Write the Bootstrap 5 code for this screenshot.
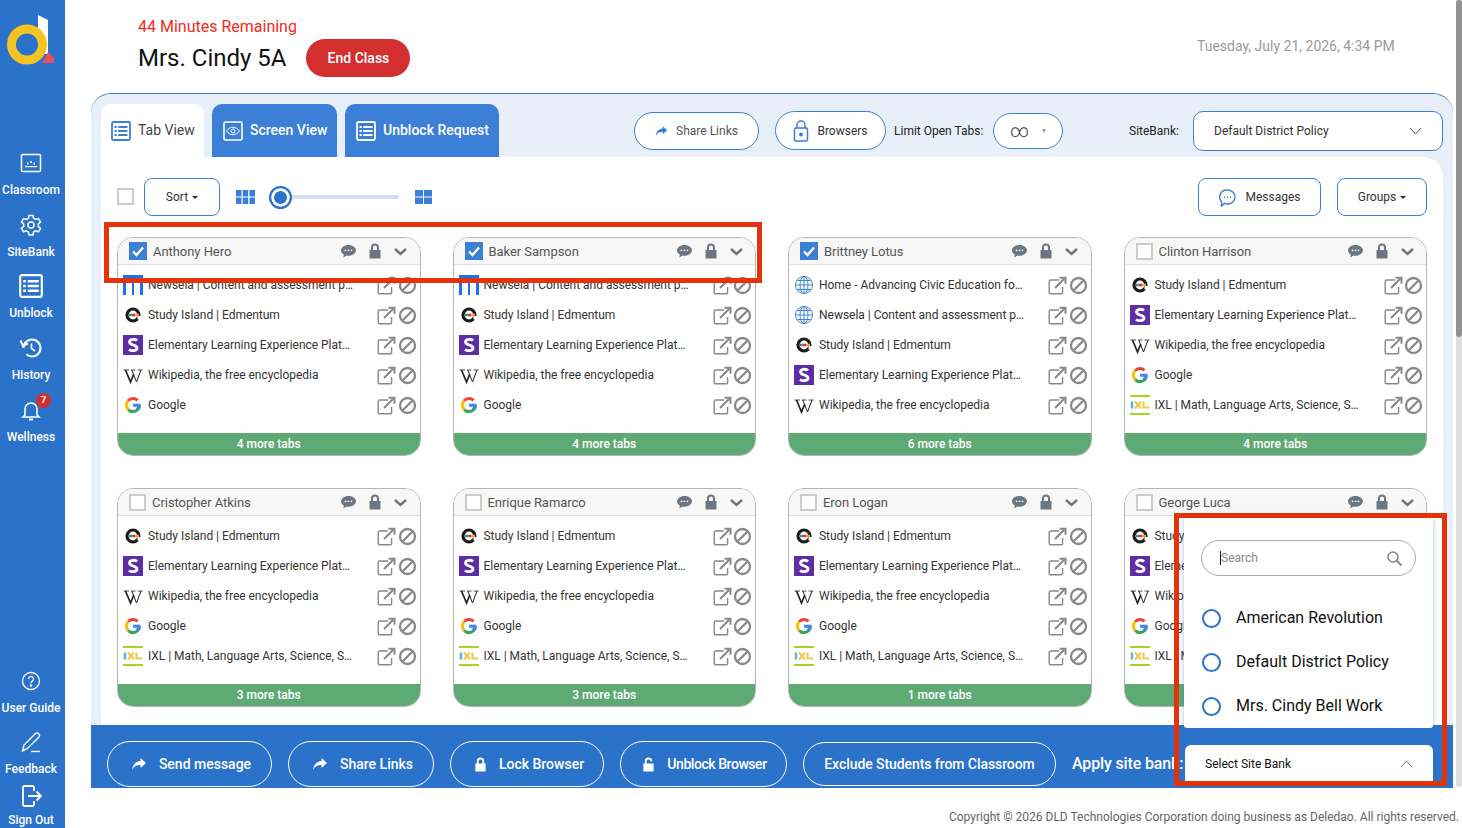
<!doctype html>
<html lang="en">
<head>
<meta charset="utf-8">
<title>Classroom</title>
<link rel="stylesheet" href="https://cdn.jsdelivr.net/npm/bootstrap@5.3.0/dist/css/bootstrap.min.css">
<style>
html,body{height:828px;overflow:hidden}
body{font-family:Roboto,"Liberation Sans",sans-serif;background:#fff;color:#222;font-size:12px;position:relative;width:1462px}
.pg-wrap{width:1462px;height:828px}
.side{width:65px;height:828px;background:#2b72cb;color:#fff;flex:none}
.logo-box{height:150px;padding:14px 0 0 7px}
.side-item{width:62px;height:61.7px;text-align:center;font-size:12px;font-weight:500;line-height:14px;position:relative;white-space:nowrap;padding-top:1px}
.side-item svg{display:block;margin:0 auto 8px;height:24px;width:24px}
.side-guide{height:61px}
.side-feed{height:54px}
.side-out{height:45px}
.side-out svg{margin-bottom:5px}
.bell-badge{position:absolute;left:36px;top:-4px;width:15px;height:15px;border-radius:50%;background:#d32f2f;font-size:9px;line-height:15px;font-weight:700}
.scroll-track{width:6px;margin-left:1px;background:#dedede;flex:none;height:787px;border-radius:0 0 3px 3px}
.scroll-thumb{height:337px;background:#929292;border-radius:3px}
.main-col{width:1390px;flex:none;padding-left:26px}
.head-area{height:93px;padding:17px 0 0 47px}
.remain{color:#f5291c;font-size:16px;line-height:19px}
.title-line{font-size:24px;color:#111;line-height:38px;margin-top:3px}
.end-btn{background:#d32f2f;color:#fff;border:0;border-radius:19px;height:38px;width:104px;font-size:14px;font-weight:500;padding:0}
.date-txt{color:#9a9a9a;font-size:14px;margin:19px 0 0 auto;width:258px;height:20px;line-height:20px}
.panel{width:1362px;height:695px;background:#e8eff9;border-top:1px solid #3c7fd5;border-radius:20px 20px 0 0;overflow:hidden;position:relative;flex-direction:column}
.top-row{height:63px;padding:10px 10px 0 10px;flex:none}
.tab-pill{height:53px;border-radius:10px 10px 0 0;background:#3b7fd6;color:#fff;font-size:14px;font-weight:500;padding-left:11px;margin-right:8px;gap:7px}
.tab-pill svg{width:20px;height:20px;flex:none}
.tab-on{background:#fff;color:#444;font-weight:400;margin-right:8px}
.out-pill{background:#fff;border:1px solid #3c7fd5;border-radius:20px;height:38px;color:#555;font-size:12px}
.lbl{font-size:12px;color:#222}
.white-box{flex:1;background:#fff;margin:0 10px;border-radius:0 20px 0 0;padding:0 16px;min-height:0;overflow:hidden}
.tool-row{height:80px;padding-top:21px;flex:none}
.sq-btn{background:#fff;border:1px solid #3c7fd5;border-radius:8px;height:38px;font-size:12px;color:#333;padding:0}
.caret-mini{display:inline-block;border-top:3.5px solid #333;border-left:3px solid transparent;border-right:3px solid transparent;margin-left:4px;vertical-align:2px}
.box-off{width:17px;height:17px;border:2px solid #ccc;background:#fff;flex:none}
.box-on{width:18px;height:18px;background:#3b7fd6;flex:none}
.track-wrap{width:130px;height:22px;position:relative}
.track-line{position:absolute;left:11px;right:0;top:9px;height:4px;background:#d0dff2;border-radius:2px}
.knob{position:absolute;left:0;top:0;width:23px;height:23px;border-radius:50%;background:#2b72cb;border:2px solid #2b72cb;box-shadow:inset 0 0 0 3px #fff}
.grid-cards{display:grid;grid-template-columns:repeat(4,303.5px);column-gap:32px;row-gap:32px}
.pc{height:219px;border:1px solid #b5b5b5;border-radius:16px;overflow:hidden;background:#fff;flex-direction:column}
.pc-head{height:27px;background:#f7f7f7;border-bottom:1px solid #ddd;padding:0 12.5px 0 11px;flex:none;font-size:13px;color:#555;gap:6px}
.pc-name{flex:1;letter-spacing:-.05px;padding-top:1px}
.pc-list{flex:1;padding-top:5px}
.tab-line{height:30px;padding:0 3px 0 5px;font-size:12px;color:#333}
.fav{width:20px;height:20px;flex:none;margin-right:5px}
.tab-name{width:207px;white-space:nowrap;letter-spacing:-.02px}
.act{width:19px;height:19px;flex:none}
.act-a{margin-left:22px}
.act-b{margin-left:1.5px}
.more-bar{height:22px;background:#5eaa74;color:#fff;text-align:center;font-size:12px;font-weight:500;line-height:22px;flex:none}
.foot-bar{height:63px;background:#2b72cb;flex:none;padding:16px 0 0 16px;gap:16px;overflow:hidden;color:#fff;margin-top:auto}
.foot-btn{height:46px;border:1px solid #fff;border-radius:23px;color:#fff;font-size:14px;font-weight:500;flex:none;gap:12px;background:transparent;padding:0}
.foot-tight{letter-spacing:-.45px;gap:12px}
.foot-exclude{height:44px;margin-top:1px;letter-spacing:-.07px}
.apply-txt{font-size:16px;font-weight:500;line-height:46px;white-space:nowrap;flex:none;letter-spacing:-.15px}
.copy-txt{height:40px;width:1368px;text-align:right;color:#666;font-size:12px;padding-top:20px;line-height:18px;white-space:nowrap}
.sb-menu{position:absolute;left:1184px;top:518px;width:249px;height:210px;background:#fff;border-radius:0 0 3px 3px;box-shadow:0 0 5px rgba(43,114,203,.45);padding:22px 17px 0 17px}
.srch{height:36px;border:1px solid #aaa;border-radius:18px;padding:0 12px 0 18px;margin-bottom:20px;color:#888;font-size:12px}
.caret-bar{width:1px;height:14px;background:#111;margin-right:0}
.opt{height:44px;font-size:16px;color:#111;gap:15px;padding-left:1px}
.radio-o{width:19px;height:19px;border:2px solid #2b72cb;border-radius:50%;flex:none}
.sb-pick{position:absolute;left:1185px;top:745px;width:248px;height:38px;background:#fff;border-radius:6px 6px 0 0;font-size:12px;color:#111;padding:0 20px}
.red-box{position:absolute;border:5px solid #e2330b;pointer-events:none}
.red-a{left:104px;top:222px;width:658px;height:61px}
.red-b{left:1174px;top:513px;width:273px;height:273px}
</style>
</head>
<body>
<svg width="0" height="0" class="position-absolute">
<defs>
<symbol id="i-list" viewBox="0 0 20 20"><rect x="1" y="1" width="18" height="18" rx="1.500" fill="none" stroke="currentColor" stroke-width="1.800"/><path d="M3.500 5h2.200v2H3.500zM7.200 5h9.300v2H7.200zM3.500 9h2.200v2H3.500zM7.200 9h9.300v2H7.200zM3.500 13h2.200v2H3.500zM7.200 13h9.300v2H7.200z" fill="currentColor"/></symbol>
<symbol id="i-eye" viewBox="0 0 20 20"><rect x="1" y="1" width="18" height="18" rx="1.500" fill="none" stroke="currentColor" stroke-width="1.600"/><path d="M3.500 10c3.500-5 9.500-5 13 0-3.500 5-9.500 5-13 0z" fill="none" stroke="currentColor"/><circle cx="10" cy="10" r="2" fill="none" stroke="currentColor"/></symbol>
<symbol id="i-share" viewBox="0 0 16 14"><path d="M9.500 1 15 6 9.500 11V8C6 8 3 9 1 13c.5-5 3.500-8.500 8.500-9z" fill="currentColor"/></symbol>
<symbol id="i-lock" viewBox="0 0 14 16"><path d="M3 7V4.500a4 4 0 0 1 8 0V7h1.500v8.500h-11V7zM5 7h4V4.500a2 2 0 0 0-4 0z" fill="currentColor"/></symbol>
<symbol id="i-ext" viewBox="0 0 19 19"><path d="M11 4H2.500a1.300 1.300 0 0 0-1.300 1.300v11.200a1.300 1.300 0 0 0 1.300 1.300h10.800a1.300 1.300 0 0 0 1.300-1.300V11" fill="none" stroke="#888" stroke-width="1.400"/><path d="M7 12 16 3M11.500 1.800H17.500V7.800" fill="none" stroke="#888" stroke-width="2"/></symbol>
<symbol id="i-ban" viewBox="0 0 19 19"><circle cx="9.500" cy="9.500" r="7.500" fill="none" stroke="#888" stroke-width="2.300"/><path d="M4.500 14.500 14.500 4.500" stroke="#888" stroke-width="2.300"/></symbol>
<symbol id="i-news" viewBox="0 0 20 20"><rect width="20" height="20" fill="#1a73e8"/><rect x="3" y="3" width="6" height="17" fill="#fff"/><rect x="11" y="3" width="6" height="17" fill="#fff"/></symbol>
<symbol id="i-edm" viewBox="0 0 20 20"><circle cx="10" cy="10" r="6" fill="none" stroke="#1a1a1a" stroke-width="3.200"/><rect x="14.500" y="11" width="5" height="3.500" fill="#fff"/><path d="M5 10h3.500" stroke="#19a05f" stroke-width="2.400"/><path d="M8.500 10h3.500" stroke="#e6236b" stroke-width="2.400"/><path d="M12 10h4" stroke="#f5a623" stroke-width="2.400"/></symbol>
<symbol id="i-ele" viewBox="0 0 20 20"><rect width="20" height="20" fill="#5b2ea6"/><path d="M14 5.500C12 3.500 6.500 4 6.500 7c0 3.500 7.500 2.500 7.500 6 0 3-5.500 3.500-8 1.500" fill="none" stroke="#fff" stroke-width="2.800"/></symbol>
<symbol id="i-wiki" viewBox="0 0 20 20"><path d="M.5 5h5.500M8 5h4.500M14.500 5h5" fill="none" stroke="#222" stroke-width=".8"/><path d="M2.500 5 7.500 17 10.800 9" fill="none" stroke="#222" stroke-width="1.700"/><path d="M8.800 5 13.500 17 18 5" fill="none" stroke="#222" stroke-width="1"/></symbol>
<symbol id="i-goog" viewBox="0 0 20 20"><path d="M17.500 10.200H10" stroke="#4285f4" stroke-width="3"/><path d="M16.500 10.200a6.500 6.500 0 0 1-11.300 4.200" fill="none" stroke="#34a853" stroke-width="3"/><path d="M16 10.200c0 1.800-1 3.300-2.200 4.300" fill="none" stroke="#4285f4" stroke-width="3"/><path d="M5.200 14.400a6.500 6.500 0 0 1 0-8.800" fill="none" stroke="#fbbc05" stroke-width="3"/><path d="M5.200 5.600a6.500 6.500 0 0 1 9.300-.200" fill="none" stroke="#ea4335" stroke-width="3"/></symbol>
<symbol id="i-ixl" viewBox="0 0 20 20"><rect width="20" height="2" fill="#a8d520"/><rect y="18" width="20" height="2" fill="#a8d520"/><path d="M2 6.500v7" stroke="#4db6e2" stroke-width="2.400"/><path d="M5 6.500l6 7M11 6.500l-6 7" stroke="#f2c94c" stroke-width="2.200"/><path d="M13.500 6.500v6h6" fill="none" stroke="#f2c94c" stroke-width="2.200"/></symbol>
<symbol id="i-globe" viewBox="0 0 20 20"><g fill="none" stroke="#3f86c8" stroke-width="1"><circle cx="10" cy="10" r="8.500"/><ellipse cx="10" cy="10" rx="4" ry="8.500"/><path d="M1.500 10h17M3 5.500h14M3 14.500h14M10 1.500v17"/></g></symbol>
</defs>
</svg>

<div class="pg-wrap d-flex">
  <nav class="side d-flex flex-column">
    <div class="logo-box">
      <svg width="48" height="52" viewBox="0 0 48 52"><path d="M31 1 41 6V40H31z" fill="#fff"/><path d="M41 38 47 44v5H35z" fill="#e8505b"/><circle cx="20" cy="30.500" r="15.500" fill="none" stroke="#f6c324" stroke-width="9"/></svg>
    </div>
    <div class="side-item"><svg viewBox="0 0 24 24" fill="none" stroke="#fff" stroke-width="1.500"><rect x="2.500" y="3.500" width="19" height="17" rx="1"/><path d="M6 15h12v1.200H6z" fill="#fff" stroke="none"/><path d="M8 12.500h1.500M11.200 11h1.600M14.500 12.500H16" stroke-width="2"/></svg>Classroom</div>
    <div class="side-item"><svg viewBox="0 0 24 24" fill="none" stroke="#fff" stroke-width="1.500"><path d="M10 2.500h4l.6 2.800 2.100 1.200 2.800-.9 2 3.400-2.200 2 0 2.400 2.200 2-2 3.400-2.800-.9-2.100 1.200-.6 2.800h-4l-.6-2.800-2.100-1.200-2.800.9-2-3.400 2.200-2v-2.400l-2.200-2 2-3.400 2.800.9 2.100-1.200z"/><circle cx="12" cy="12" r="3"/></svg>SiteBank</div>
    <div class="side-item"><svg viewBox="0 0 20 20" style="color:#fff"><use href="#i-list"/></svg>Unblock</div>
    <div class="side-item"><svg viewBox="0 0 24 24" fill="none" stroke="#fff" stroke-width="2"><path d="M4.500 12a8.500 8.500 0 1 1 2.800 6.300"/><path d="M1.500 4.500 4 10l5-2.500" /><path d="M12.500 7.500V12.500L16 15" stroke-width="1.600"/></svg>History</div>
    <div class="side-item"><svg viewBox="0 0 24 24" fill="none" stroke="#fff" stroke-width="1.600"><path d="M6 17V11a6 6 0 0 1 12 0v6l2 2H4z"/><path d="M10 21.500h4" stroke-width="2"/></svg><span class="bell-badge">7</span>Wellness</div>
    <div class="mt-auto"></div>
    <div class="side-item side-guide"><svg viewBox="0 0 24 24" fill="none" stroke="#fff" stroke-width="1.300"><circle cx="12" cy="12" r="8.500"/><path d="M9.500 10a2.500 2.500 0 1 1 3.800 2.100c-.9.600-1.300 1-1.300 2"/><circle cx="12" cy="16.500" r=".6" fill="#fff"/></svg>User Guide</div>
    <div class="side-item side-feed"><svg viewBox="0 0 24 24" fill="none" stroke="#fff" stroke-width="1.400"><path d="M3.500 21l1.500-6L16.500 3.500a2.500 2.500 0 0 1 3.500 3.500L8.500 18.500z"/><path d="M12 21.500h9"/></svg>Feedback</div>
    <div class="side-item side-out"><svg viewBox="0 0 24 24" fill="none" stroke="#fff" stroke-width="1.800"><path d="M15 7V3.500a1.500 1.500 0 0 0-1.500-1.500h-8A1.500 1.500 0 0 0 4 3.500v17A1.500 1.500 0 0 0 5.500 22h8a1.500 1.500 0 0 0 1.500-1.500V17"/><path d="M9 12h13M17.500 7.500 22 12l-4.500 4.500"/></svg>Sign Out</div>
  </nav>

  <main class="main-col">
    <header class="head-area d-flex">
      <div>
        <div class="remain">44 Minutes Remaining</div>
        <div class="d-flex align-items-center title-line gap-3 ">
          <span class="me-1">Mrs. Cindy 5A</span>
          <button class="end-btn btn">End Class</button>
        </div>
      </div>
      <div class="date-txt">Tuesday, July 21, 2026, 4:34 PM</div>
    </header>

    <section class="panel d-flex">
      <div class="top-row d-flex align-items-start">
        <div class="tab-pill tab-on d-flex align-items-center" style="width:103px;padding-left:10px"><svg style="color:#3b7fd6"><use href="#i-list"/></svg>Tab View</div>
        <div class="tab-pill d-flex align-items-center" style="width:125px"><svg><use href="#i-eye"/></svg>Screen View</div>
        <div class="tab-pill d-flex align-items-center" style="width:154px"><svg><use href="#i-list"/></svg>Unblock Request</div>

        <div class="out-pill d-flex align-items-center justify-content-center gap-2" style="width:125px;margin:8px 0 0 127px"><svg width="13" height="12" style="color:#3b7fd6"><use href="#i-share"/></svg>Share Links</div>
        <div class="out-pill d-flex align-items-center justify-content-center gap-2" style="width:111px;height:39px;margin:7px 0 0 16px;color:#333"><svg width="16" height="22" style="color:#3b7fd6" viewBox="0 0 16 22" fill="none" stroke="currentColor" stroke-width="1.500"><rect x="1.500" y="8" width="13" height="13" rx="1.500"/><path d="M4 8V5a4 4 0 0 1 8 0v3"/><circle cx="8" cy="14.500" r="1.200" fill="currentColor"/></svg>Browsers</div>
        <span class="lbl" style="margin:18px 0 0 8px;width:99px">Limit Open Tabs:</span>
        <div class="out-pill d-flex align-items-center" style="width:70px;height:36px;margin:9px 0 0 0;color:#333;padding-left:16px;gap:13px"><span style="font-size:18px;line-height:18px;font-weight:300">∞</span><span style="color:#999;font-size:8px">▾</span></div>
        <span class="lbl" style="margin:18px 0 0 66px;width:64px">SiteBank:</span>
        <div class="out-pill d-flex align-items-center justify-content-between" style="width:250px;height:40px;border-radius:10px;margin:7px 0 0 0;padding:0 20px;color:#333"><span>Default District Policy</span><svg width="13" height="8" viewBox="0 0 13 8" fill="none" stroke="#555"><path d="M1 1l5.500 6L12 1"/></svg></div>
      </div>

      <div class="white-box d-flex flex-column">
        <div class="tool-row d-flex align-items-start">
          <span class="box-off" style="margin-top:10px"></span>
          <button class="sq-btn btn" style="width:76px;margin-left:10px">Sort<span class="caret-mini"></span></button>
          <svg width="19" height="14" viewBox="0 0 19 14" style="margin:12px 14px 0 16px" fill="#3b7fd6"><rect width="5.500" height="6.500"/><rect x="6.700" width="5.500" height="6.500"/><rect x="13.500" width="5.500" height="6.500"/><rect y="7.500" width="5.500" height="6.500"/><rect x="6.700" y="7.500" width="5.500" height="6.500"/><rect x="13.500" y="7.500" width="5.500" height="6.500"/></svg>
          <div class="track-wrap" style="margin-top:8px"><div class="track-line"></div><div class="knob"></div></div>
          <svg width="17" height="14" viewBox="0 0 17 14" style="margin:12px 0 0 16px" fill="#3b7fd6"><rect width="8" height="6.500"/><rect x="9" width="8" height="6.500"/><rect y="7.500" width="8" height="6.500"/><rect x="9" y="7.500" width="8" height="6.500"/></svg>
          <button class="sq-btn btn d-flex align-items-center justify-content-center gap-2 ms-auto" style="width:123px"><svg width="19" height="19" viewBox="0 0 19 19" fill="none" stroke="#3b7fd6" stroke-width="1.400"><path d="M9.500 2a7.500 7 0 0 1 0 14c-1 0-2-.2-3-.6L3.500 18l.2-4.200A7 7 0 0 1 9.500 2z"/><path d="M6 9.200h1M9 9.200h1M12 9.200h1" stroke-width="1.600"/></svg>Messages</button>
          <button class="sq-btn btn" style="width:90px;margin-left:16px">Groups<span class="caret-mini"></span></button>
        </div>
        <div class="grid-cards" id="cards"></div>
      </div>

      <div class="foot-bar d-flex">
        <button class="foot-btn btn d-flex align-items-center justify-content-center" style="width:165px;padding-left:3px"><svg width="16" height="14" ><use href="#i-share"/></svg>Send message</button>
        <button class="foot-btn btn d-flex align-items-center justify-content-center" style="width:146px;padding-left:3px"><svg width="16" height="14"><use href="#i-share"/></svg>Share Links</button>
        <button class="foot-btn btn d-flex align-items-center justify-content-center" style="width:154px;padding-left:4px"><svg width="13" height="15"><use href="#i-lock"/></svg>Lock Browser</button>
        <button class="foot-btn foot-tight btn d-flex align-items-center justify-content-center" style="width:167px;padding-left:2px"><svg width="13" height="15" viewBox="0 0 14 16"><path d="M3 7V4.500a4 4 0 0 1 8 0h-2a2 2 0 0 0-4 0V7h7.500v8.500h-11V7z" fill="#fff"/></svg>Unblock Browser</button>
        <button class="foot-btn foot-exclude btn d-flex align-items-center justify-content-center" style="width:253px">Exclude Students from Classroom</button>
        <span class="apply-txt">Apply site bank:</span>
      </div>
    </section>
    <div class="copy-txt">Copyright © 2026 DLD Technologies Corporation doing business as Deledao. All rights reserved.</div>
  </main>
  <div class="scroll-track"><div class="scroll-thumb"></div></div>
</div>

<div class="sb-menu">
  <div class="srch d-flex align-items-center"><span class="caret-bar"></span><span class="flex-grow-1">Search</span><svg width="17" height="17" viewBox="0 0 17 17" fill="none" stroke="#888" stroke-width="1.600"><circle cx="7" cy="7" r="5"/><path d="M10.800 10.800 15.500 15.500" stroke-width="2"/></svg></div>
  <div class="opt d-flex align-items-center"><span class="radio-o"></span>American Revolution</div>
  <div class="opt d-flex align-items-center"><span class="radio-o"></span>Default District Policy</div>
  <div class="opt d-flex align-items-center"><span class="radio-o"></span>Mrs. Cindy Bell Work</div>
</div>
<div class="sb-pick d-flex align-items-center justify-content-between"><span>Select Site Bank</span><svg width="13" height="8" viewBox="0 0 13 8" fill="none" stroke="#777"><path d="M1 7l5.500-6L12 7"/></svg></div>
<div class="red-box red-a"></div>
<div class="red-box red-b"></div>

<script>
const S={n:['i-news','Newsela | Content and assessment p…'],s:['i-edm','Study Island | Edmentum'],e:['i-ele','Elementary Learning Experience Plat…'],w:['i-wiki','Wikipedia, the free encyclopedia'],g:['i-goog','Google'],x:['i-ixl','IXL | Math, Language Arts, Science, S…'],h:['i-globe','Home - Advancing Civic Education fo…'],m:['i-globe','Newsela | Content and assessment p…']};
const D=[['Anthony Hero',1,'nsewg',4],['Baker Sampson',1,'nsewg',4],['Brittney Lotus',1,'hmsew',6],['Clinton Harrison',0,'sewgx',4],['Cristopher Atkins',0,'sewgx',3],['Enrique Ramarco',0,'sewgx',3],['Eron Logan',0,'sewgx',1],['George Luca',0,'sewgx',3]];
const check='<svg class="box-on" viewBox="0 0 18 18"><rect width="18" height="18" fill="#3b7fd6"/><path d="M4 9.500 7.500 13 14 5.500" fill="none" stroke="#fff" stroke-width="2.400"/></svg>';
const box='<span class="box-off"></span>';
const icons='<svg width="15" height="14" viewBox="0 0 16 15" class="ms-1"><path d="M8 1c4.400 0 8 2.600 8 5.800s-3.600 5.800-8 5.800c-.8 0-1.500-.1-2.200-.2L2.500 14.500l.5-3.200C1.100 10.300 0 8.600 0 6.800 0 3.600 3.600 1 8 1z" fill="#6b7680"/><circle cx="4.800" cy="6.800" r="1" fill="#f7f7f7"/><circle cx="8" cy="6.800" r="1" fill="#f7f7f7"/><circle cx="11.200" cy="6.800" r="1" fill="#f7f7f7"/></svg><svg width="14" height="16" style="margin-left:6px;color:#6b7680"><use href="#i-lock"/></svg><svg width="13" height="8" viewBox="0 0 13 8" fill="none" stroke="#6b7680" stroke-width="2.400" style="margin:1px 0 0 6px"><path d="M1 1l5.500 5L12 1"/></svg>';
document.getElementById('cards').innerHTML=D.map(d=>`<article class="pc d-flex"><div class="pc-head d-flex align-items-center">${d[1]?check:box}<span class="pc-name">${d[0]}</span>${icons}</div><div class="pc-list">${[...d[2]].map(k=>`<div class="tab-line d-flex align-items-center"><svg class="fav"><use href="#${S[k][0]}"/></svg><span class="tab-name">${S[k][1]}</span><svg class="act act-a"><use href="#i-ext"/></svg><svg class="act act-b"><use href="#i-ban"/></svg></div>`).join('')}</div><div class="more-bar">${d[3]} more tabs</div></article>`).join('');
</script>
</body>
</html>
